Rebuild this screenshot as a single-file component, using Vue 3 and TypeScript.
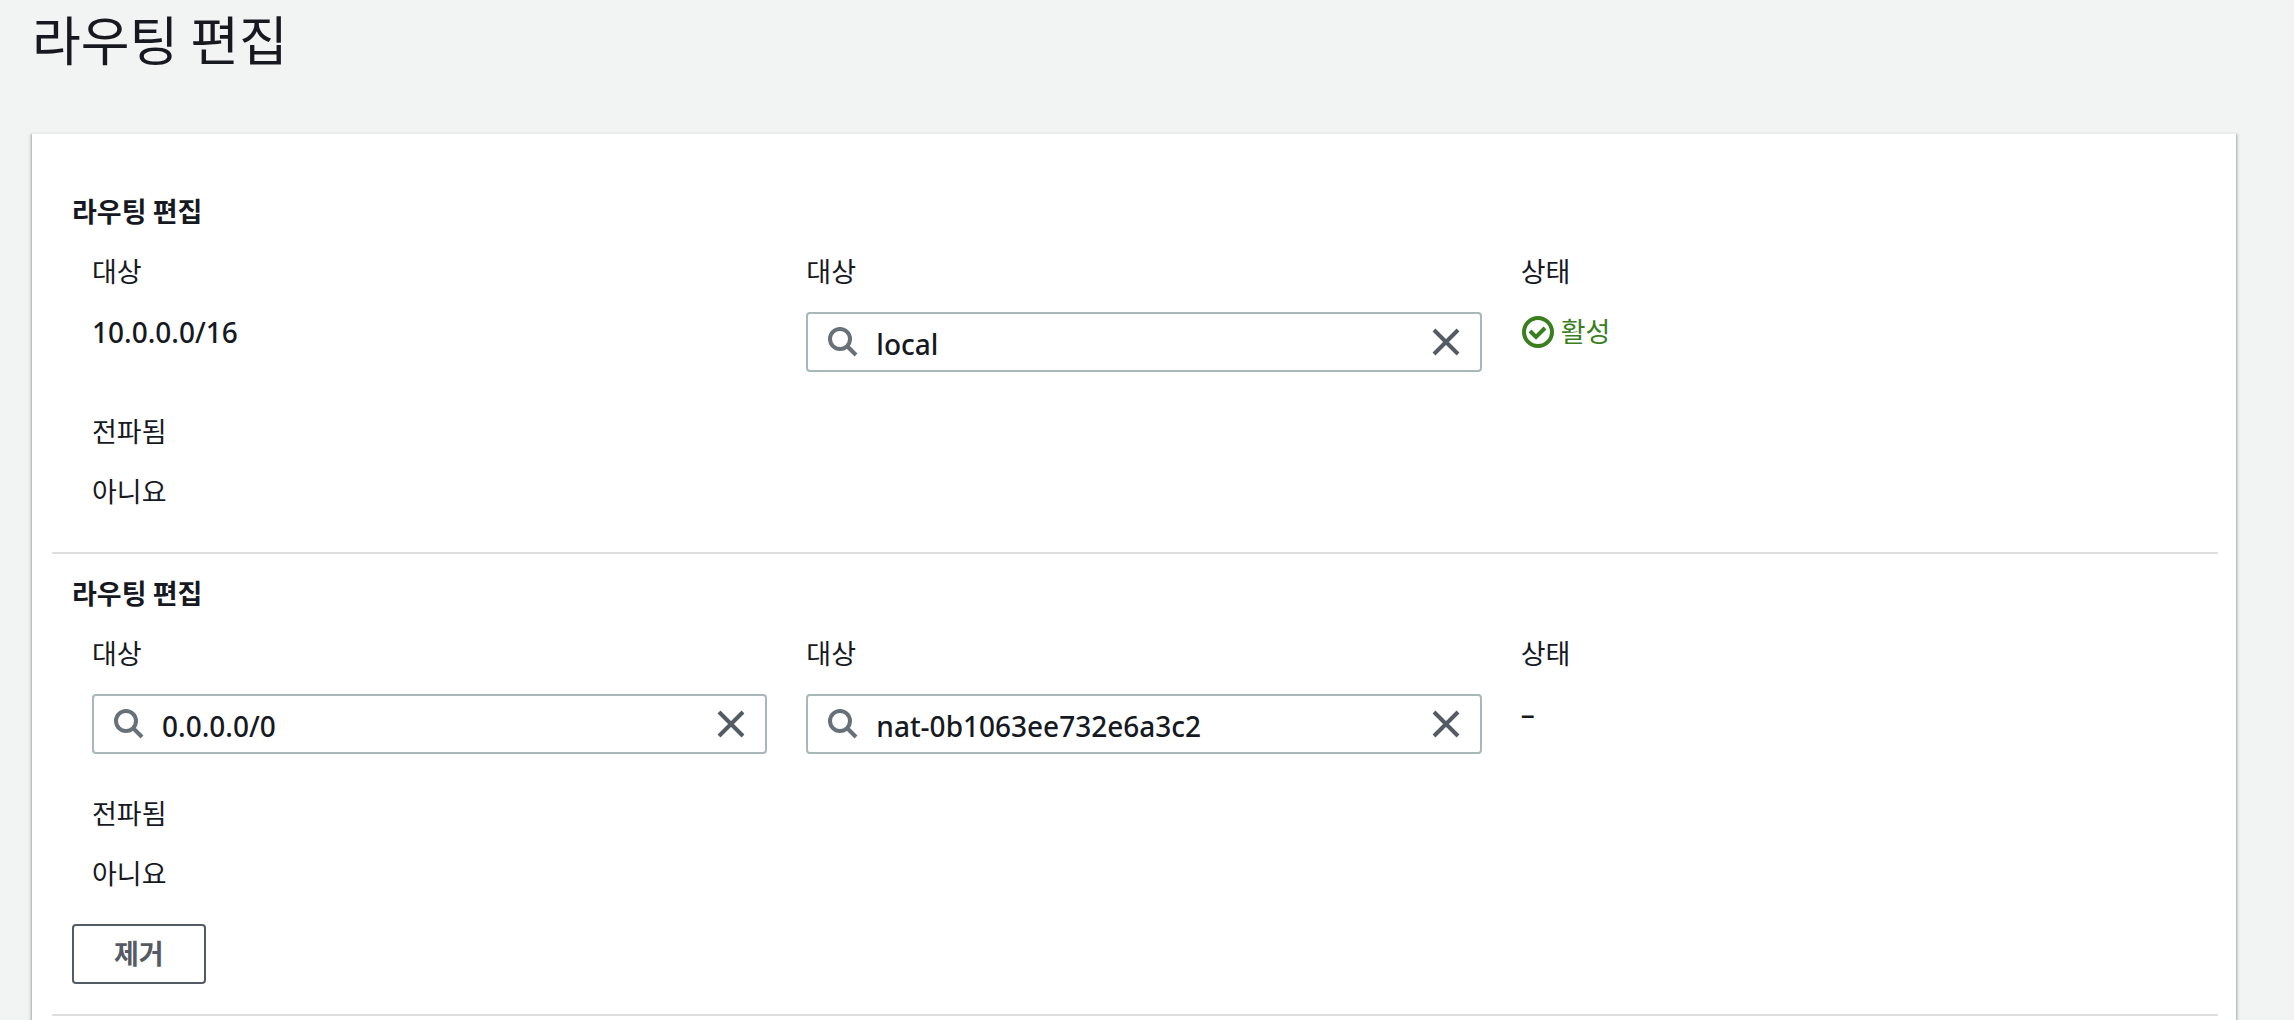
<script setup lang="ts">
import { reactive } from 'vue'

interface Route {
  id: string
  destination: string
  target: string
  active: boolean
  removable: boolean
}

const routes = reactive<Route[]>([
  { id: 'local', destination: '10.0.0.0/16', target: 'local', active: true, removable: false },
  { id: 'nat', destination: '0.0.0.0/0', target: 'nat-0b1063ee732e6a3c2', active: false, removable: true },
])

function removeRoute(id: string) {
  const index = routes.findIndex((route) => route.id === id)
  if (index >= 0) routes.splice(index, 1)
}
</script>

<template>
  <main class="page">
    <h1 class="title">라우팅 편집</h1>
    <form class="panel" @submit.prevent>
      <section v-for="route in routes" :key="route.id" class="route">
        <h2 class="route-title">라우팅 편집</h2>
        <div class="fields">
          <div class="field">
            <template v-if="route.removable">
              <label class="label" :for="`destination-${route.id}`">대상</label>
              <div class="search">
                <svg class="search-icon" viewBox="0 0 32 32" aria-hidden="true">
                  <circle cx="14" cy="13" r="10" />
                  <path d="M21 20l9 9" />
                </svg>
                <input :id="`destination-${route.id}`" v-model="route.destination" class="input" type="text" />
                <button class="clear" type="button" aria-label="지우기" @click="route.destination = ''">
                  <svg class="clear-icon" viewBox="0 0 32 32" aria-hidden="true">
                    <path d="M4 4l24 24M28 4L4 28" />
                  </svg>
                </button>
              </div>
            </template>
            <template v-else>
              <div class="label">대상</div>
              <div class="value latin">{{ route.destination }}</div>
            </template>
          </div>

          <div class="field">
            <label class="label" :for="`target-${route.id}`">대상</label>
            <div class="search">
              <svg class="search-icon" viewBox="0 0 32 32" aria-hidden="true">
                <circle cx="14" cy="13" r="10" />
                <path d="M21 20l9 9" />
              </svg>
              <input :id="`target-${route.id}`" v-model="route.target" class="input" type="text" />
              <button class="clear" type="button" aria-label="지우기" @click="route.target = ''">
                <svg class="clear-icon" viewBox="0 0 32 32" aria-hidden="true">
                  <path d="M4 4l24 24M28 4L4 28" />
                </svg>
              </button>
            </div>
          </div>

          <div class="field">
            <div class="label">상태</div>
            <div v-if="route.active" class="value status">
              <svg class="status-icon" viewBox="0 0 36 36" aria-hidden="true">
                <circle cx="17" cy="18" r="14" />
                <path d="M9 17l6 6 9-9" />
              </svg>
              <span>활성</span>
            </div>
            <div v-else class="value latin">–</div>
          </div>

          <div class="field">
            <div class="label">전파됨</div>
            <div class="value">아니요</div>
          </div>
        </div>
        <button v-if="route.removable" class="remove" type="button" @click="removeRoute(route.id)">제거</button>
      </section>
    </form>
  </main>
</template>

<style>
body {
  margin: 0;
  background: #f2f3f3;
}
</style>

<style scoped>
.page {
  box-sizing: border-box;
  display: flex;
  flex-direction: column;
  min-height: 100vh;
  padding: 0 58px 0 32px;
  overflow: hidden;
  color: #16191f;
  font-family: "Noto Sans CJK KR", sans-serif;
  font-size: 27px;
  font-weight: 400;
  line-height: 38px;
}

.title {
  margin: 0 0 55px;
  font-size: 53px;
  font-weight: 400;
  line-height: 77px;
}

.panel {
  flex: 1;
  padding: 38px 18px 0 20px;
  border-top: 2px solid #eaeded;
  background: #fff;
  box-shadow:
    0 2px 2px rgba(0, 28, 36, 0.3),
    2px 2px 2px rgba(0, 28, 36, 0.15),
    -2px 2px 2px rgba(0, 28, 36, 0.15);
}

.route {
  padding: 20px 22px 0 20px;
  border-bottom: 2px solid #dfdfdf;
}

.route-title {
  margin: 0 0 22px;
  font-size: 27px;
  font-weight: 700;
  line-height: 38px;
}

.fields {
  display: grid;
  grid-template-columns: repeat(3, minmax(0, 1fr));
  gap: 40px 39px;
  padding-left: 20px;
  padding-bottom: 40px;
}

.field {
  display: flex;
  flex-direction: column;
  gap: 22px;
}

.value {
  min-height: 40px;
}

.latin,
.input {
  font-family: "Noto Sans", "Noto Sans CJK KR", sans-serif;
  font-size: 28px;
  font-weight: 500;
  line-height: 40px;
}

.search {
  box-sizing: border-box;
  display: flex;
  align-items: center;
  height: 60px;
  padding: 0 18px;
  border: 2px solid #aab7b8;
  border-radius: 4px;
}

.search-icon {
  flex: none;
  width: 32px;
  height: 32px;
  margin-right: 18px;
  fill: none;
  stroke: #687078;
  stroke-width: 4;
}

.input {
  flex: 1;
  min-width: 0;
  padding: 4px 0 0;
  border: 0;
  outline: 0;
  background: transparent;
  color: inherit;
}

.clear {
  display: flex;
  padding: 0;
  border: 0;
  background: none;
  cursor: pointer;
}

.clear-icon {
  width: 32px;
  height: 32px;
  fill: none;
  stroke: #545b64;
  stroke-width: 4;
}

.status {
  display: flex;
  align-items: flex-start;
  gap: 4px;
  color: #3a7f1d;
}

.status-icon {
  width: 36px;
  height: 36px;
  margin-top: 2px;
  fill: none;
  stroke: currentColor;
  stroke-width: 4;
}

.remove {
  height: 60px;
  margin: -10px 0 30px;
  padding: 0 40px 2px;
  border: 2px solid #545b64;
  border-radius: 4px;
  background: #fff;
  color: #545b64;
  font-family: inherit;
  font-size: 27px;
  font-weight: 700;
  line-height: 38px;
  cursor: pointer;
}
</style>
